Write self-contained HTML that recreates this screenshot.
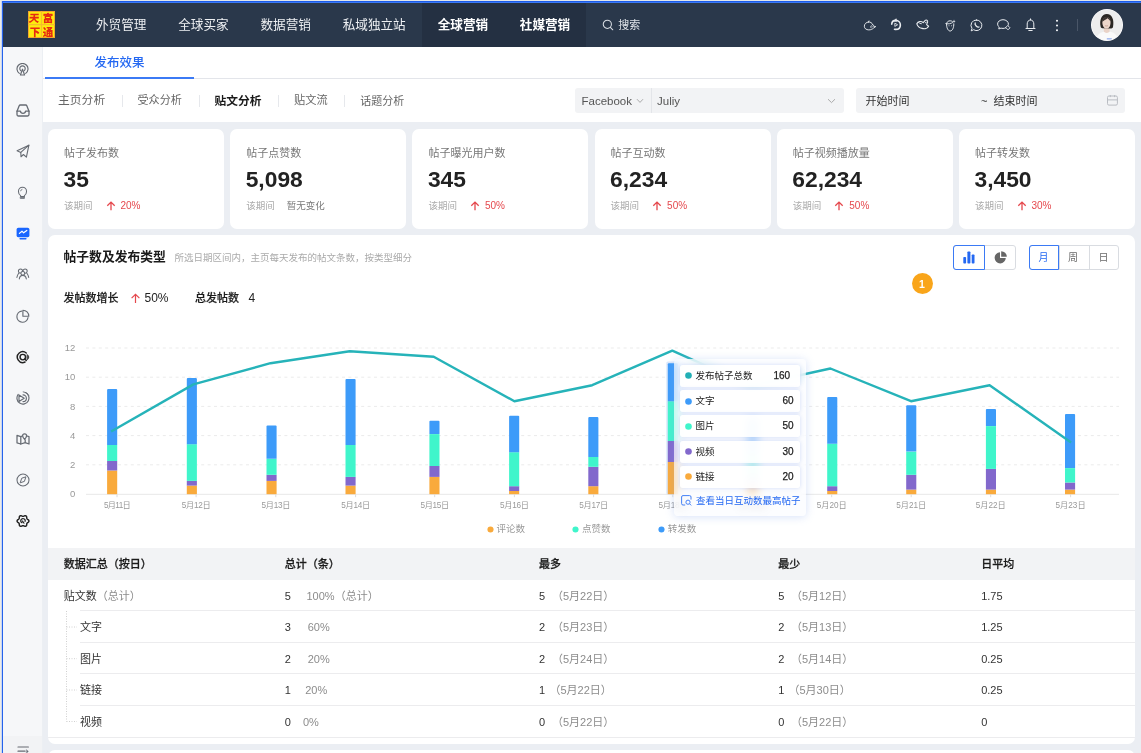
<!DOCTYPE html>
<html lang="zh-CN"><head><meta charset="utf-8"><title>发布效果</title>
<style>
*{box-sizing:border-box;margin:0;padding:0}
html,body{width:1141px;height:753px;overflow:hidden;background:#ebeef3}
body{font-family:"Liberation Sans","Noto Sans CJK SC",sans-serif;color:#333;position:relative;-webkit-font-smoothing:antialiased}
.a{position:absolute}
.t{position:absolute;white-space:nowrap;line-height:1}
.hdr{left:3px;top:3px;width:1138px;height:44px;background:#2a384b}
.hdr .dark{left:419px;top:0;width:164px;height:44px;background:#243042}
.nav{font-size:12.6px;color:#eef0f3;top:15.5px}
.nav.b{font-weight:700;color:#fff}
.side{left:3px;top:47px;width:40px;height:706px;background:#f6f7f9;border-right:1px solid #eceff3}
.side .bot{left:0;top:689px;width:39px;height:17px;background:#f2f3f5}
.tabs{left:43px;top:47px;width:1098px;height:32px;background:#fff;border-bottom:1px solid #e3e5ea}
.sub{left:43px;top:79px;width:1098px;height:43px;background:#fff}
.sub .i{font-size:12px;color:#666;top:16px}
.sub .i.on{color:#1a1a1a;font-weight:700}
.sub .d{position:absolute;top:16px;width:1px;height:12px;background:#e6e8ec}
.box{position:absolute;background:#f2f3f5;border-radius:3px}
.card{position:absolute;top:129px;width:176px;height:100px;background:#fff;border-radius:7px}
.card .h{left:16px;top:18.5px;font-size:11px;color:#777}
.card .n{left:15.5px;top:38.5px;font-size:22.8px;font-weight:700;color:#222}
.card .p{left:16px;top:71.8px;font-size:9.5px;color:#aaa}
.card .r{left:72.5px;top:71.5px;font-size:10px;color:#e5484d}
.card .g{left:56.5px;top:71.8px;font-size:9.5px;color:#7a7a7a}
.panel{left:48px;top:235px;width:1087px;height:509px;background:#fff;border-radius:7px;overflow:hidden}
.panel2{left:48px;top:750px;width:1087px;height:20px;background:#fff;border-radius:7px}
</style></head>
<body>
<div id="root" style="position:absolute;left:0;top:0;width:1141px;height:753px;overflow:hidden;will-change:transform">

<div class="a" style="left:0;top:0;width:1141px;height:1px;background:#e3e6e9"></div>
<div class="a" style="left:0;top:1px;width:1141px;height:1px;background:#1d5be8"></div>
<div class="a" style="left:0;top:2px;width:1141px;height:1px;background:#3b7af5"></div>
<div class="a" style="left:0;top:0;width:1px;height:753px;background:#edece6"></div>
<div class="a" style="left:1px;top:1px;width:1px;height:752px;background:#c9d6f3"></div>
<div class="a" style="left:2px;top:1px;width:1px;height:752px;background:#2563eb"></div>
<div class="a hdr">
<div class="a dark"></div>
<svg class="a" style="left:25px;top:8px" width="27" height="27" viewBox="0 0 27 27"><rect width="27" height="27" fill="#fdec0d"/><rect x=".5" y=".5" width="26" height="26" fill="none" stroke="#f3a62e" stroke-width="1"/><path d="M13.500 0V27M0 13.700H27" stroke="#f6bd2c" stroke-width="1.300"/><g fill="#e62a12" font-family="Liberation Sans,Noto Sans CJK SC,sans-serif" font-weight="900" font-size="10.500"><text x="1.800" y="11.300" transform="skewX(-6)" style="font-size:10.500px">天</text><text x="14.700" y="11" style="font-size:10.500px">富</text><text x="1.800" y="24.700" style="font-size:10.500px">下</text><text x="14.700" y="24.600" style="font-size:10.500px">通</text></g></svg>
<span class="t nav" style="left:93px">外贸管理</span>
<span class="t nav" style="left:175.2px">全球买家</span>
<span class="t nav" style="left:257.5px">数据营销</span>
<span class="t nav" style="left:339.7px">私域独立站</span>
<span class="t nav b" style="left:434.7px">全球营销</span>
<span class="t nav b" style="left:516.8px">社媒营销</span>
<svg class="a" style="left:599px;top:16.2px" width="12.4" height="12.4" viewBox="0 0 13 13" fill="none" stroke="#d8dde3" stroke-width="1.1"><circle cx="5.6" cy="5.6" r="4.3"/><path d="M8.8 8.8L11.3 11.3" stroke-linecap="round"/></svg>
<span class="t" style="left:615.3px;top:16.5px;font-size:11px;color:#dfe3e8">搜索</span>
<svg class="a" style="left:860.0px;top:16.7px" width="14" height="11" viewBox="0 0 14 11" fill="none" stroke="#e9ecf0" stroke-width="1" stroke-linecap="round" stroke-linejoin="round" ><g transform="translate(.6 .5) scale(.92)"><path d="M5.400 1.600C7.400 1.400 9.200 2.600 9.800 4.200M5.400 1.600C2.800 1.800 .8 3.800 .8 6.200C.8 8.600 2.800 10.200 5.600 10.200C8 10.200 9.600 9.400 10.600 8.400L13.200 6.600L10.800 6.200C10.800 5.400 10.400 4.800 9.800 4.200"/><path d="M5.400 1.600L5.800 .5" /><path d="M8.300 5.600C7.500 6.300 7.500 7.400 8.300 8.100" stroke-width=".9"/><circle cx="9.300" cy="6.900" r=".55" fill="#e9ecf0" stroke="none"/></g></svg>
<svg class="a" style="left:887.2px;top:15.2px" width="12" height="13" viewBox="0 0 12 13" fill="none" stroke="#e9ecf0" stroke-width="1" stroke-linecap="round" stroke-linejoin="round" ><g transform="translate(.4 .3) scale(.94)"><path d="M1.400 6.200C1.600 3.800 3.400 2.200 5.800 2.200C8.600 2.200 10.600 4.400 10.600 7C10.600 9.800 8.600 11.800 5.800 11.800C5.200 11.800 4.800 11.700 4.400 11.600" stroke-width="1.700"/><path d="M3.600 2.800L6.200 .4L6.600 3.200Z" fill="#e9ecf0" stroke-width=".6"/><path d="M4.700 5.600V8.600L7.300 7.100Z" stroke-width=".9"/></g></svg>
<svg class="a" style="left:913.1px;top:16.4px" width="14" height="11" viewBox="0 0 14 11" fill="none" stroke="#e9ecf0" stroke-width="1" stroke-linecap="round" stroke-linejoin="round" ><path d="M.8 4.800C2 2.400 5 1.800 7.200 3.600L9 1.600C10.200 .4 12 1.400 11.600 3L10.600 5.600L12.600 7.200C11.600 9.400 8.600 10.200 6 9.400C3.600 8.800 1.600 7.200 .8 4.800Z" stroke-width="1.100"/><path d="M3.800 4.400L5.400 4.700" stroke-width=".9"/><path d="M9.300 3.800L10.300 3.200" stroke-width=".9"/></svg>
<svg class="a" style="left:941.5px;top:15.5px" width="11" height="13" viewBox="0 0 11 13" fill="none" stroke="#e9ecf0" stroke-width="1" stroke-linecap="round" stroke-linejoin="round" ><path d="M1.600 5C1.600 3 3.200 1.800 5.200 1.800C6 1.800 6.600 2 7.200 2.300M8.800 4.800C9 8.600 7.400 12 5.200 12C3 12 1.400 8.600 1.600 5"/><path d="M.8 4.600C2.800 5.200 6 4.800 7.600 3.600" stroke-width=".9"/><path d="M9 .6L9.500 1.900L10.700 2.300L9.500 2.800L9 4L8.500 2.800L7.300 2.300L8.500 1.900Z" fill="#e9ecf0" stroke="none"/><circle cx="4" cy="6.800" r=".5" fill="#e9ecf0" stroke="none"/><circle cx="6.600" cy="6.800" r=".5" fill="#e9ecf0" stroke="none"/></svg>
<svg class="a" style="left:967.3px;top:15.5px" width="13" height="13" viewBox="0 0 13 13" fill="none" stroke="#e9ecf0" stroke-width="1" stroke-linecap="round" stroke-linejoin="round" ><path d="M6.600 1A5.300 5.300 0 1 1 3.600 10.700L1.200 11.900L2 9.400A5.300 5.300 0 0 1 6.600 1Z"/><path d="M5.200 4C4.800 4.800 5.200 6 6.200 7C7.200 8 8.200 8.400 9 8" stroke-width="1.300"/></svg>
<svg class="a" style="left:993.5px;top:16.0px" width="14" height="12" viewBox="0 0 14 12" fill="none" stroke="#e9ecf0" stroke-width="1" stroke-linecap="round" stroke-linejoin="round" ><path d="M8.800 8.800C8 9.200 7 9.400 6 9.400C5.200 9.400 4.600 9.300 4 9.100L1.800 10L2.200 8C1.200 7.200 .6 6.200 .6 5C.6 2.600 3 .7 6 .7C9 .7 11.400 2.600 11.400 5C11.400 5.400 11.300 5.800 11.200 6.200"/><path d="M11 6.800L13 8.800L11 10.800L9 8.800Z" stroke-width=".9"/></svg>
<svg class="a" style="left:1022.0px;top:15.0px" width="11" height="13" viewBox="0 0 11 13" fill="none" stroke="#e9ecf0" stroke-width="1" stroke-linecap="round" stroke-linejoin="round" ><path d="M5.500 .9V2M1 10.500H10M2.200 10.500V6C2.200 3.600 3.600 2 5.500 2C7.400 2 8.800 3.600 8.800 6V10.500M3.800 12.500H7.200"/></svg>
<svg class="a" style="left:1052.4px;top:15.5px" width="4" height="13" viewBox="0 0 4 13" fill="#f0f2f5"><circle cx="2" cy="1.800" r="1.050"/><circle cx="2" cy="6.500" r="1.050"/><circle cx="2" cy="11.200" r="1.050"/></svg>
<svg class="a" style="left:1087.700px;top:6.100px" width="32" height="32" viewBox="0 0 32 32"><defs><clipPath id="avc"><circle cx="16" cy="16" r="15.300"/></clipPath><filter id="avb" x="-20%" y="-20%" width="140%" height="140%"><feGaussianBlur stdDeviation=".45"/></filter></defs><circle cx="16" cy="16" r="16" fill="#fdfdfd"/><g clip-path="url(#avc)"><rect width="32" height="32" fill="#ededed"/><g filter="url(#avb)"><path d="M4.500 32C5 26.500 8.500 23.800 12.500 22.800H19.500C23.500 23.800 27 26.500 27.500 32Z" fill="#fafafa"/><path d="M12.800 18.500H18.600V22.600C17.400 24.400 14 24.400 12.800 22.600Z" fill="#ead3c7"/><path d="M9.600 17.600C8.300 11 10.600 5 15.800 5C21.200 5 23.400 11 22 18C21.600 19.200 20.800 19.600 20 19.400L11.400 19.200C10.400 19.200 9.800 18.600 9.600 17.600Z" fill="#2b2624"/><path d="M11.400 12.400C11.800 10 13.400 8.200 15.600 8.200C17.800 8.200 19.300 10 19.500 12.400C19.700 15.400 18.900 19.400 15.500 19.600C12.300 19.400 11.100 15.400 11.400 12.400Z" fill="#edd6ca"/><path d="M11 12.800C11.600 9.800 13.200 8 15.600 7.800C17.800 8 19.400 9.600 19.900 12.800C18.600 11.200 17.600 10 16.600 9.200C15 10.400 12.800 11.800 11 12.800Z" fill="#3a322f"/><path d="M14 16.600C14.800 17.100 16.200 17.100 17 16.600" stroke="#a9766a" stroke-width=".5" fill="none"/><rect x="15.800" y="29" width="5" height="1.600" fill="#a9bdf0"/></g></g></svg>
<div class="a" style="left:1073.5px;top:16px;width:1px;height:12px;background:#4a5668"></div>
</div>
<div class="a side"><div class="a bot"></div><svg class="a" style="left:13.0px;top:15.8px" width="13" height="13" viewBox="0 0 13 13" fill="none" stroke="#666b73" stroke-width="1.15" stroke-linecap="round" stroke-linejoin="round"><path d="M3.300 10.400A5.500 5.500 0 1 1 9.700 10.400"/><path d="M4.700 7.600A2.700 2.700 0 1 1 8.300 7.600"/><path d="M6.500 6.200L4.400 12H8.600Z"/></svg>
<svg class="a" style="left:12.5px;top:56.8px" width="14" height="13" viewBox="0 0 14 13" fill="none" stroke="#666b73" stroke-width="1.3" stroke-linecap="round" stroke-linejoin="round"><path d="M1 7.200L3.200 1.800C3.400 1.300 3.800 1 4.300 1H9.700C10.200 1 10.600 1.300 10.800 1.800L13 7.200V10.600C13 11.400 12.400 12 11.600 12H2.400C1.600 12 1 11.400 1 10.600Z"/><path d="M1 7.200H4.400C4.600 8.600 5.600 9.400 7 9.400C8.400 9.400 9.400 8.600 9.600 7.200H13"/></svg>
<svg class="a" style="left:12.7px;top:97.0px" width="14" height="14" viewBox="0 0 14 14" fill="none" stroke="#666b73" stroke-width="1.1" stroke-linecap="round" stroke-linejoin="round"><path d="M12.900 1.200L1.100 6.800L4.800 8.400L5 12.800L7.400 10.500L10.400 13.200Z"/><path d="M4.800 8.400L12.900 1.200"/></svg>
<svg class="a" style="left:14.2px;top:138.6px" width="11" height="14" viewBox="0 0 11 14" fill="none" stroke="#666b73" stroke-width="1.15" stroke-linecap="round" stroke-linejoin="round"><g transform="translate(.55 .3) scale(.9 .95)"><path d="M3.400 9.800C1.800 8.800 1 7.200 1 5.500C1 3 3 1 5.500 1C8 1 10 3 10 5.500C10 7.200 9.200 8.800 7.600 9.800V10.800H3.400Z"/><path d="M3.400 11.200H7.600V12.800H3.400Z" fill="#8a8e95" stroke-width=".8"/><path d="M3.400 4.800C3.600 4 4.200 3.400 5 3.200" stroke-width=".9"/></g></svg>
<svg class="a" style="left:12.5px;top:179.9px" width="14" height="13" viewBox="0 0 14 13"><rect x=".6" y=".8" width="12.800" height="9.400" rx="1.700" fill="#1a66ff"/><rect x="3.400" y="10.900" width="7.200" height="1.500" rx=".75" fill="#1a66ff"/><path d="M3.400 6.400L6 4.200L7.600 5.800L10.800 3.400" fill="none" stroke="#fff" stroke-width="1.200" stroke-linecap="round" stroke-linejoin="round"/></svg>
<svg class="a" style="left:12.6px;top:221.4px" width="14" height="12" viewBox="0 0 14 12" fill="none" stroke="#666b73" stroke-width="1.05" stroke-linecap="round" stroke-linejoin="round"><circle cx="4.500" cy="3.100" r="2.100"/><circle cx="9.100" cy="3.100" r="2.100"/><circle cx="6.800" cy="5.300" r="1.900" fill="#f6f7f9"/><path d="M2.700 5.200C1.800 6.400 1.200 7.800 .9 9.400M10.900 5.200C11.800 6.400 12.400 7.800 12.700 9.400M3.300 10.900C3.600 8.600 5 7.400 6.800 7.400C8.600 7.400 10 8.600 10.300 10.900"/></svg>
<svg class="a" style="left:12.6px;top:261.6px" width="14" height="14" viewBox="0 0 14 14" fill="none" stroke="#666b73" stroke-width="1.15" stroke-linecap="round" stroke-linejoin="round"><path d="M5.600 2.100A5.600 5.600 0 1 0 12 8.600"/><path d="M6.900 1.200V7.200H12.800C12.800 3.900 10.200 1.200 6.900 1.200Z"/></svg>
<svg class="a" style="left:12.5px;top:302.5px" width="14" height="14" viewBox="0 0 14 14" fill="none" stroke="#222" stroke-width="1.45" stroke-linecap="round" stroke-linejoin="round"><path d="M10.270 2.960A5.400 5.400 0 1 0 9.080 12"/><circle cx="6.800" cy="7.100" r="2.750"/><path d="M8.780 9.080L10.300 10.600"/><path d="M11.300 4.600C13.300 6 13.300 8.400 11.300 9.800Z" fill="#222" stroke-width=".6"/></svg>
<svg class="a" style="left:12.5px;top:343.7px" width="14" height="14" viewBox="0 0 14 14" fill="none" stroke="#666b73" stroke-width="1.15" stroke-linecap="round" stroke-linejoin="round"><path d="M9.400 1.600A6 6 0 1 1 2.200 3.400"/><path d="M7 3.800A3.400 3.400 0 0 1 7 10.600"/><path d="M3 4V10.400L8.200 7.200Z"/><path d="M7.200 .8A6.400 6.400 0 0 1 12.800 4.200" stroke-width=".9"/></svg>
<svg class="a" style="left:12.6px;top:386.0px" width="14" height="12" viewBox="0 0 14 12" fill="none" stroke="#666b73" stroke-width="1.25" stroke-linecap="round" stroke-linejoin="round"><path d="M1 2.400L4.800 3.600V11L1 9.800Z"/><path d="M4.800 3.600L6.200 3M4.800 11L9.200 9.600M9.200 6.800V9.600L13 11V3.600L11 3"/><path d="M8.600 .8C9.800 .8 10.600 1.700 10.600 2.800C10.600 4.200 8.600 6.400 8.600 6.400C8.600 6.400 6.600 4.200 6.600 2.800C6.600 1.700 7.400 .8 8.600 .8Z"/></svg>
<svg class="a" style="left:12.5px;top:426.0px" width="14" height="14" viewBox="0 0 14 14" fill="none" stroke="#666b73" stroke-width="1.05" stroke-linecap="round" stroke-linejoin="round"><circle cx="7" cy="7" r="6"/><path d="M9.800 4.200L8.400 8.400L4.200 9.800L5.600 5.600Z" stroke-width="1"/></svg>
<svg class="a" style="left:12.9px;top:466.9px" width="14" height="14" viewBox="0 0 14 14" fill="none" stroke="#222" stroke-width="1.45" stroke-linecap="round" stroke-linejoin="round"><path d="M12.90 7.00 L12.79 7.51 L12.48 7.98 L12.05 8.37 L11.60 8.69 L11.21 8.99 L10.95 9.30 L10.81 9.69 L10.75 10.18 L10.70 10.74 L10.58 11.31 L10.33 11.81 L9.95 12.17 L9.46 12.32 L8.90 12.29 L8.35 12.11 L7.85 11.87 L7.41 11.68 L7.00 11.61 L6.59 11.68 L6.15 11.87 L5.65 12.11 L5.10 12.29 L4.54 12.32 L4.05 12.17 L3.67 11.81 L3.42 11.31 L3.30 10.74 L3.25 10.18 L3.19 9.69 L3.05 9.30 L2.79 8.99 L2.40 8.69 L1.95 8.37 L1.52 7.98 L1.21 7.51 L1.10 7.00 L1.21 6.49 L1.52 6.02 L1.95 5.63 L2.40 5.31 L2.79 5.01 L3.05 4.70 L3.19 4.31 L3.25 3.82 L3.30 3.26 L3.42 2.69 L3.67 2.19 L4.05 1.83 L4.54 1.68 L5.10 1.71 L5.65 1.89 L6.15 2.13 L6.59 2.32 L7.00 2.39 L7.41 2.32 L7.85 2.13 L8.35 1.89 L8.90 1.71 L9.46 1.68 L9.95 1.83 L10.33 2.19 L10.58 2.69 L10.70 3.26 L10.75 3.82 L10.81 4.31 L10.95 4.70 L11.21 5.01 L11.60 5.31 L12.05 5.63 L12.48 6.02 L12.79 6.49Z"/><path d="M5.900 8.700A2.200 2.200 0 1 1 9.100 7.400M6.500 7C6.900 7.900 7.400 8.600 8 9.100" stroke-width="1.200"/></svg>
<svg class="a" style="left:13.500px;top:699px" width="13" height="8" viewBox="0 0 13 8" fill="none" stroke="#666b73" stroke-width="1.200" stroke-linecap="round"><path d="M1 1H11.400M1 5.200H8"/><path d="M9.600 3.800L11.400 5.400L9.600 7Z" fill="#666b73" stroke-width=".4"/></svg></div>
<div class="a tabs"><span class="t" style="left:51.5px;top:10px;font-size:12.5px;font-weight:500;color:#2468f2">发布效果</span><div class="a" style="left:2px;top:30px;width:149px;height:2px;background:#3b7af5"></div></div>
<div class="a sub">
<span class="t i" style="left:15px;font-size:11.8px;top:16.1px">主页分析</span>
<span class="t i" style="left:94.5px;font-size:11.1px;top:16.45px">受众分析</span>
<span class="t i on" style="left:171.5px;font-size:11.75px;top:16.125px">贴文分析</span>
<span class="t i" style="left:251px;font-size:11.2px;top:16.4px">贴文流</span>
<span class="t i" style="left:317.2px;font-size:11px;top:16.5px">话题分析</span>
<div class="d" style="left:78.5px"></div>
<div class="d" style="left:155.5px"></div>
<div class="d" style="left:235px"></div>
<div class="d" style="left:300.5px"></div>
<div class="box" style="left:532px;top:9px;width:269px;height:25px"></div>
<div class="a" style="left:607.5px;top:9px;width:1px;height:25px;background:#e3e5e9"></div>
<span class="t" style="left:538.5px;top:16.5px;font-size:11.5px;color:#555">Facebook</span>
<svg class="a" style="left:592.5px;top:18.8px" width="8" height="6" viewBox="0 0 8 6" fill="none" stroke="#aaa" stroke-width="1"><path d="M1 1.2L4 4.4L7 1.2"/></svg>
<span class="t" style="left:614px;top:16.5px;font-size:11.5px;color:#555">Juliy</span>
<svg class="a" style="left:784px;top:18.8px" width="9" height="6" viewBox="0 0 9 6" fill="none" stroke="#aaa" stroke-width="1"><path d="M1 1.2L4.5 4.6L8 1.2"/></svg>
<div class="box" style="left:813px;top:9px;width:269px;height:25px"></div>
<span class="t" style="left:822.5px;top:17.2px;font-size:11px;color:#333">开始时间</span>
<span class="t" style="left:938px;top:17.2px;font-size:11px;color:#333">~</span>
<span class="t" style="left:950.5px;top:17.2px;font-size:11px;color:#333">结束时间</span>
<svg class="a" style="left:1063.900px;top:16.300px" width="11" height="11" viewBox="0 0 11 11" fill="none" stroke="#b9bcc2" stroke-width="1"><rect x=".5" y="1" width="9.900" height="9.100" rx="1.400"/><path d="M.5 4.900H10.400M3.300 .1V2.100M7.600 .1V2.100"/></svg>
</div>
<div class="card" style="left:48.0px"><span class="t h">帖子发布数</span><span class="t n">35</span><span class="t p">该期间</span>
<svg class="a" style="left:57.5px;top:71.5px" width="10" height="10" viewBox="0 0 10 10" fill="none" stroke="#e5484d" stroke-width="1.3"><path d="M5 9.3V1.2M1.3 4.8L5 1.1L8.7 4.8"/></svg><span class="t r">20%</span>
</div>
<div class="card" style="left:230.2px"><span class="t h">帖子点赞数</span><span class="t n">5,098</span><span class="t p">该期间</span>
<span class="t g">暂无变化</span>
</div>
<div class="card" style="left:412.4px"><span class="t h">帖子曝光用户数</span><span class="t n">345</span><span class="t p">该期间</span>
<svg class="a" style="left:57.5px;top:71.5px" width="10" height="10" viewBox="0 0 10 10" fill="none" stroke="#e5484d" stroke-width="1.3"><path d="M5 9.3V1.2M1.3 4.8L5 1.1L8.7 4.8"/></svg><span class="t r">50%</span>
</div>
<div class="card" style="left:594.6px"><span class="t h">帖子互动数</span><span class="t n">6,234</span><span class="t p">该期间</span>
<svg class="a" style="left:57.5px;top:71.5px" width="10" height="10" viewBox="0 0 10 10" fill="none" stroke="#e5484d" stroke-width="1.3"><path d="M5 9.3V1.2M1.3 4.8L5 1.1L8.7 4.8"/></svg><span class="t r">50%</span>
</div>
<div class="card" style="left:776.8px"><span class="t h">帖子视频播放量</span><span class="t n">62,234</span><span class="t p">该期间</span>
<svg class="a" style="left:57.5px;top:71.5px" width="10" height="10" viewBox="0 0 10 10" fill="none" stroke="#e5484d" stroke-width="1.3"><path d="M5 9.3V1.2M1.3 4.8L5 1.1L8.7 4.8"/></svg><span class="t r">50%</span>
</div>
<div class="card" style="left:959.0px"><span class="t h">帖子转发数</span><span class="t n">3,450</span><span class="t p">该期间</span>
<svg class="a" style="left:57.5px;top:71.5px" width="10" height="10" viewBox="0 0 10 10" fill="none" stroke="#e5484d" stroke-width="1.3"><path d="M5 9.3V1.2M1.3 4.8L5 1.1L8.7 4.8"/></svg><span class="t r">30%</span>
</div>
<div class="a panel">
<div class="a" style="left:-48px;top:-235px;width:1141px;height:753px">
<span class="t" style="left:63.5px;top:250.5px;font-size:12.8px;font-weight:700;color:#1a1a1a">帖子数及发布类型</span>
<span class="t" style="left:174.5px;top:253px;font-size:9.5px;color:#aaa">所选日期区间内，主页每天发布的帖文条数，按类型细分</span>
<span class="t" style="left:63.5px;top:292.5px;font-size:11px;font-weight:500;color:#1c1c1c;-webkit-text-stroke:.2px #1c1c1c">发帖数增长</span>
<svg class="a" style="left:130px;top:292.5px" width="11" height="11" viewBox="0 0 11 11" fill="none" stroke="#e5484d" stroke-width="1.2"><path d="M5.5 10V1.4M1.6 5.2L5.5 1.3L9.4 5.2"/></svg>
<span class="t" style="left:144.5px;top:292.3px;font-size:12px;color:#222">50%</span>
<span class="t" style="left:195px;top:292.5px;font-size:11px;font-weight:500;color:#1c1c1c;-webkit-text-stroke:.2px #1c1c1c">总发帖数</span>
<span class="t" style="left:248.5px;top:292.3px;font-size:12px;color:#222">4</span>
<div class="a" style="left:953px;top:244.5px;width:63px;height:25px;border:1px solid #d9dce1;border-radius:3px"></div>
<div class="a" style="left:953px;top:244.5px;width:32px;height:25px;border:1px solid #3b7af5;border-radius:3px 0 0 3px"></div>
<svg class="a" style="left:962.5px;top:250.5px" width="12" height="13" viewBox="0 0 12 13" fill="#2468f2"><rect x="0.3" y="6" width="2.8" height="6.6" rx="0.8"/><rect x="4.4" y="0.4" width="3" height="12.2" rx="0.8"/><rect x="8.7" y="3.4" width="2.8" height="9.2" rx="0.8"/></svg>
<svg class="a" style="left:993.5px;top:251px" width="13" height="13" viewBox="0 0 13 13" fill="#666"><path d="M6 1.2A5.6 5.6 0 1 0 11.8 7H6Z"/><path d="M7.2 0.2A5.6 5.6 0 0 1 12.8 5.8H7.2Z"/></svg>
<div class="a" style="left:1029px;top:244.5px;width:90px;height:25px;border:1px solid #d9dce1;border-radius:3px"></div>
<div class="a" style="left:1058.5px;top:245px;width:1px;height:24px;background:#d9dce1"></div>
<div class="a" style="left:1089px;top:245px;width:1px;height:24px;background:#d9dce1"></div>
<div class="a" style="left:1029px;top:244.5px;width:30px;height:25px;border:1px solid #3b7af5;border-radius:3px 0 0 3px"></div>
<span class="t" style="left:1038.5px;top:252.6px;font-size:10px;color:#2468f2">月</span>
<span class="t" style="left:1068px;top:252.6px;font-size:10px;color:#6a6a6a">周</span>
<span class="t" style="left:1098.5px;top:252.6px;font-size:10px;color:#6a6a6a">日</span>
<div class="a" style="left:911.7px;top:273.4px;width:21px;height:21px;border-radius:50%;background:#f9a51a"></div><span class="t" style="left:919px;top:278.5px;font-size:10.5px;font-weight:700;color:#fff">1</span>
<svg class="a" style="left:0;top:0" width="1141" height="753" viewBox="0 0 1141 753">
<path d="M86 348 H1119" stroke="#ebebeb" stroke-width="1" stroke-dasharray="3 3.4" fill="none"/>
<path d="M86 377.2 H1119" stroke="#ebebeb" stroke-width="1" stroke-dasharray="3 3.4" fill="none"/>
<path d="M86 406.4 H1119" stroke="#ebebeb" stroke-width="1" stroke-dasharray="3 3.4" fill="none"/>
<path d="M86 435.6 H1119" stroke="#ebebeb" stroke-width="1" stroke-dasharray="3 3.4" fill="none"/>
<path d="M86 464.8 H1119" stroke="#ebebeb" stroke-width="1" stroke-dasharray="3 3.4" fill="none"/>
<path d="M86 494.3 H1119" stroke="#e8e8e8" stroke-width="1" fill="none"/>
<path d="M117 494.5 V497.2" stroke="#dcdcdc" stroke-width="1"/>
<path d="M196.1 494.5 V497.2" stroke="#dcdcdc" stroke-width="1"/>
<path d="M275.8 494.5 V497.2" stroke="#dcdcdc" stroke-width="1"/>
<path d="M355.6 494.5 V497.2" stroke="#dcdcdc" stroke-width="1"/>
<path d="M434.7 494.5 V497.2" stroke="#dcdcdc" stroke-width="1"/>
<path d="M514.4 494.5 V497.2" stroke="#dcdcdc" stroke-width="1"/>
<path d="M593.6 494.5 V497.2" stroke="#dcdcdc" stroke-width="1"/>
<path d="M672.8 494.5 V497.2" stroke="#dcdcdc" stroke-width="1"/>
<path d="M752.2 494.5 V497.2" stroke="#dcdcdc" stroke-width="1"/>
<path d="M831.7 494.5 V497.2" stroke="#dcdcdc" stroke-width="1"/>
<path d="M911.2 494.5 V497.2" stroke="#dcdcdc" stroke-width="1"/>
<path d="M990.7 494.5 V497.2" stroke="#dcdcdc" stroke-width="1"/>
<path d="M1070.6 494.5 V497.2" stroke="#dcdcdc" stroke-width="1"/>
<rect x="666.3" y="361.5" width="13" height="133" fill="#dbe8fb" rx="1.5"/>
<rect x="107.1" y="470.5" width="10.1" height="23.7" fill="#f9aa3c"/>
<rect x="107.1" y="461" width="10.1" height="9.5" fill="#8268cc"/>
<rect x="107.1" y="445" width="10.1" height="16" fill="#40f5cb"/>
<path d="M107.1 445 V390 Q107.1 389 108.1 389 H116.19999999999999 Q117.19999999999999 389 117.19999999999999 390 V445 Z" fill="#3d9bf9"/>
<rect x="186.8" y="485.6" width="10.1" height="8.6" fill="#f9aa3c"/>
<rect x="186.8" y="480.9" width="10.1" height="4.7" fill="#8268cc"/>
<rect x="186.8" y="444.2" width="10.1" height="36.7" fill="#40f5cb"/>
<path d="M186.8 444.2 V379 Q186.8 378 187.8 378 H195.9 Q196.9 378 196.9 379 V444.2 Z" fill="#3d9bf9"/>
<rect x="266.5" y="480.9" width="10.1" height="13.3" fill="#f9aa3c"/>
<rect x="266.5" y="474.8" width="10.1" height="6.1" fill="#8268cc"/>
<rect x="266.5" y="458.8" width="10.1" height="16.0" fill="#40f5cb"/>
<path d="M266.5 458.8 V426.6 Q266.5 425.6 267.5 425.6 H275.6 Q276.6 425.6 276.6 426.6 V458.8 Z" fill="#3d9bf9"/>
<rect x="345.5" y="485.6" width="10.1" height="8.6" fill="#f9aa3c"/>
<rect x="345.5" y="476.9" width="10.1" height="8.7" fill="#8268cc"/>
<rect x="345.5" y="445" width="10.1" height="31.9" fill="#40f5cb"/>
<path d="M345.5 445 V379.9 Q345.5 378.9 346.5 378.9 H354.6 Q355.6 378.9 355.6 379.9 V445 Z" fill="#3d9bf9"/>
<rect x="429.4" y="476.9" width="10.1" height="17.3" fill="#f9aa3c"/>
<rect x="429.4" y="466" width="10.1" height="10.9" fill="#8268cc"/>
<rect x="429.4" y="434.1" width="10.1" height="31.9" fill="#40f5cb"/>
<path d="M429.4 434.1 V421.8 Q429.4 420.8 430.4 420.8 H438.5 Q439.5 420.8 439.5 421.8 V434.1 Z" fill="#3d9bf9"/>
<rect x="509.1" y="491" width="10.1" height="3.2" fill="#f9aa3c"/>
<rect x="509.1" y="486.2" width="10.1" height="4.8" fill="#8268cc"/>
<rect x="509.1" y="452.2" width="10.1" height="34.0" fill="#40f5cb"/>
<path d="M509.1 452.2 V416.8 Q509.1 415.8 510.1 415.8 H518.2 Q519.2 415.8 519.2 416.8 V452.2 Z" fill="#3d9bf9"/>
<rect x="588.3" y="486.2" width="10.1" height="8.0" fill="#f9aa3c"/>
<rect x="588.3" y="466.8" width="10.1" height="19.4" fill="#8268cc"/>
<rect x="588.3" y="457" width="10.1" height="9.8" fill="#40f5cb"/>
<path d="M588.3 457 V417.9 Q588.3 416.9 589.3 416.9 H597.4 Q598.4 416.9 598.4 417.9 V457 Z" fill="#3d9bf9"/>
<rect x="667.8" y="462" width="10.1" height="32.2" fill="#f9aa3c"/>
<rect x="667.8" y="441" width="10.1" height="21" fill="#8268cc"/>
<rect x="667.8" y="401.2" width="10.1" height="39.8" fill="#40f5cb"/>
<path d="M667.8 401.2 V364.2 Q667.8 363.2 668.8 363.2 H676.9 Q677.9 363.2 677.9 364.2 V401.2 Z" fill="#3d9bf9"/>
<rect x="747.6" y="485" width="10.1" height="9.2" fill="#f9aa3c"/>
<rect x="747.6" y="478" width="10.1" height="7" fill="#8268cc"/>
<rect x="747.6" y="452" width="10.1" height="26" fill="#40f5cb"/>
<path d="M747.6 452 V419 Q747.6 418 748.6 418 H756.7 Q757.7 418 757.7 419 V452 Z" fill="#3d9bf9"/>
<rect x="827.2" y="491" width="10.1" height="3.2" fill="#f9aa3c"/>
<rect x="827.2" y="486.2" width="10.1" height="4.8" fill="#8268cc"/>
<rect x="827.2" y="443.7" width="10.1" height="42.5" fill="#40f5cb"/>
<path d="M827.2 443.7 V397.9 Q827.2 396.9 828.2 396.9 H836.3000000000001 Q837.3000000000001 396.9 837.3000000000001 397.9 V443.7 Z" fill="#3d9bf9"/>
<rect x="906.2" y="489.6" width="10.1" height="4.6" fill="#f9aa3c"/>
<rect x="906.2" y="474.8" width="10.1" height="14.8" fill="#8268cc"/>
<rect x="906.2" y="451.6" width="10.1" height="23.2" fill="#40f5cb"/>
<path d="M906.2 451.6 V406.2 Q906.2 405.2 907.2 405.2 H915.3000000000001 Q916.3000000000001 405.2 916.3000000000001 406.2 V451.6 Z" fill="#3d9bf9"/>
<rect x="985.9" y="489.6" width="10.1" height="4.6" fill="#f9aa3c"/>
<rect x="985.9" y="468.9" width="10.1" height="20.7" fill="#8268cc"/>
<rect x="985.9" y="426.1" width="10.1" height="42.8" fill="#40f5cb"/>
<path d="M985.9 426.1 V409.9 Q985.9 408.9 986.9 408.9 H995.0 Q996.0 408.9 996.0 409.9 V426.1 Z" fill="#3d9bf9"/>
<rect x="1065" y="489.6" width="10.1" height="4.6" fill="#f9aa3c"/>
<rect x="1065" y="482.5" width="10.1" height="7.1" fill="#8268cc"/>
<rect x="1065" y="468.1" width="10.1" height="14.4" fill="#40f5cb"/>
<path d="M1065 468.1 V414.9 Q1065 413.9 1066 413.9 H1074.1 Q1075.1 413.9 1075.1 414.9 V468.1 Z" fill="#3d9bf9"/>
<polyline points="111.1,431.5 193.4,384.4 270.5,363.2 349.7,351.2 433.7,356.8 514.4,401.2 592.2,385.2 672.3,350.7 751,386 830.4,368.5 911,401.2 989.6,385.2 1071.1,442.6" fill="none" stroke="#26b3b9" stroke-width="2.4" stroke-linejoin="round"/>
</svg>
<span class="t" style="right:1065.7px;top:343.2px;font-size:9.5px;color:#999">12</span>
<span class="t" style="right:1065.7px;top:372.4px;font-size:9.5px;color:#999">10</span>
<span class="t" style="right:1065.7px;top:401.59999999999997px;font-size:9.5px;color:#999">8</span>
<span class="t" style="right:1065.7px;top:430.8px;font-size:9.5px;color:#999">4</span>
<span class="t" style="right:1065.7px;top:460.0px;font-size:9.5px;color:#999">2</span>
<span class="t" style="right:1065.7px;top:489.2px;font-size:9.5px;color:#999">0</span>
<span class="t" style="left:97px;top:502px;width:40px;text-align:center;font-size:8.2px;color:#999;letter-spacing:-0.65px">5月11日</span>
<span class="t" style="left:176.1px;top:502px;width:40px;text-align:center;font-size:8.2px;color:#999;letter-spacing:-0.3px">5月12日</span>
<span class="t" style="left:255.8px;top:502px;width:40px;text-align:center;font-size:8.2px;color:#999;letter-spacing:-0.3px">5月13日</span>
<span class="t" style="left:335.6px;top:502px;width:40px;text-align:center;font-size:8.2px;color:#999;letter-spacing:-0.3px">5月14日</span>
<span class="t" style="left:414.7px;top:502px;width:40px;text-align:center;font-size:8.2px;color:#999;letter-spacing:-0.3px">5月15日</span>
<span class="t" style="left:494.4px;top:502px;width:40px;text-align:center;font-size:8.2px;color:#999;letter-spacing:-0.3px">5月16日</span>
<span class="t" style="left:573.6px;top:502px;width:40px;text-align:center;font-size:8.2px;color:#999;letter-spacing:-0.3px">5月17日</span>
<span class="t" style="left:652.8px;top:502px;width:40px;text-align:center;font-size:8.2px;color:#999;letter-spacing:-0.3px">5月18日</span>
<span class="t" style="left:732.2px;top:502px;width:40px;text-align:center;font-size:8.2px;color:#999;letter-spacing:-0.3px">5月19日</span>
<span class="t" style="left:811.7px;top:502px;width:40px;text-align:center;font-size:8.2px;color:#999;letter-spacing:0px">5月20日</span>
<span class="t" style="left:891.2px;top:502px;width:40px;text-align:center;font-size:8.2px;color:#999;letter-spacing:0px">5月21日</span>
<span class="t" style="left:970.7px;top:502px;width:40px;text-align:center;font-size:8.2px;color:#999;letter-spacing:0px">5月22日</span>
<span class="t" style="left:1050.6px;top:502px;width:40px;text-align:center;font-size:8.2px;color:#999;letter-spacing:0px">5月23日</span>
<svg class="a" style="left:485.5px;top:524.500px" width="9" height="9" viewBox="0 0 9 9"><circle cx="4.500" cy="4.500" r="3.050" fill="#f9aa3c"/></svg>
<span class="t" style="left:496.5px;top:524px;font-size:9.5px;color:#999">评论数</span>
<svg class="a" style="left:571.0px;top:524.500px" width="9" height="9" viewBox="0 0 9 9"><circle cx="4.500" cy="4.500" r="3.050" fill="#40f5cb"/></svg>
<span class="t" style="left:582.0px;top:524px;font-size:9.5px;color:#999">点赞数</span>
<svg class="a" style="left:656.7px;top:524.500px" width="9" height="9" viewBox="0 0 9 9"><circle cx="4.500" cy="4.500" r="3.050" fill="#3d9bf9"/></svg>
<span class="t" style="left:667.7px;top:524px;font-size:9.5px;color:#999">转发数</span>
<div class="a" style="left:674.2px;top:358.5px;width:131.4px;height:157.6px;border-radius:4px;background:rgba(250,252,255,.66);backdrop-filter:blur(4px);-webkit-backdrop-filter:blur(4px);box-shadow:0 1px 9px rgba(130,165,235,.32)"></div>
<div class="a" style="left:680.2px;top:364.6px;width:120px;height:22.3px;border-radius:3px;background:rgba(255,255,255,.9);box-shadow:0 0 4px rgba(110,140,225,.30)"></div>
<svg class="a" style="left:684px;top:371.25px" width="9" height="9" viewBox="0 0 9 9"><circle cx="4.500" cy="4.500" r="3.300" fill="#22afb5"/></svg>
<span class="t" style="left:695.5px;top:370.70000000000005px;font-size:9.5px;color:#222">发布帖子总数</span>
<span class="t" style="left:773.5px;top:370.70000000000005px;font-size:10px;color:#222;-webkit-text-stroke:.25px #222">160</span>
<div class="a" style="left:680.2px;top:389.9px;width:120px;height:22.3px;border-radius:3px;background:rgba(255,255,255,.9);box-shadow:0 0 4px rgba(110,140,225,.30)"></div>
<svg class="a" style="left:684px;top:396.54999999999995px" width="9" height="9" viewBox="0 0 9 9"><circle cx="4.500" cy="4.500" r="3.300" fill="#3d9bf9"/></svg>
<span class="t" style="left:695.5px;top:396.0px;font-size:9.5px;color:#222">文字</span>
<span class="t" style="left:782.5px;top:396.0px;font-size:10px;color:#222;-webkit-text-stroke:.25px #222">60</span>
<div class="a" style="left:680.2px;top:415.2px;width:120px;height:22.3px;border-radius:3px;background:rgba(255,255,255,.9);box-shadow:0 0 4px rgba(110,140,225,.30)"></div>
<svg class="a" style="left:684px;top:421.84999999999997px" width="9" height="9" viewBox="0 0 9 9"><circle cx="4.500" cy="4.500" r="3.300" fill="#40f5cb"/></svg>
<span class="t" style="left:695.5px;top:421.3px;font-size:9.5px;color:#222">图片</span>
<span class="t" style="left:782.5px;top:421.3px;font-size:10px;color:#222;-webkit-text-stroke:.25px #222">50</span>
<div class="a" style="left:680.2px;top:440.5px;width:120px;height:22.3px;border-radius:3px;background:rgba(255,255,255,.9);box-shadow:0 0 4px rgba(110,140,225,.30)"></div>
<svg class="a" style="left:684px;top:447.15px" width="9" height="9" viewBox="0 0 9 9"><circle cx="4.500" cy="4.500" r="3.300" fill="#8268cc"/></svg>
<span class="t" style="left:695.5px;top:446.6px;font-size:9.5px;color:#222">视频</span>
<span class="t" style="left:782.5px;top:446.6px;font-size:10px;color:#222;-webkit-text-stroke:.25px #222">30</span>
<div class="a" style="left:680.2px;top:465.8px;width:120px;height:22.3px;border-radius:3px;background:rgba(255,255,255,.9);box-shadow:0 0 4px rgba(110,140,225,.30)"></div>
<svg class="a" style="left:684px;top:472.45px" width="9" height="9" viewBox="0 0 9 9"><circle cx="4.500" cy="4.500" r="3.300" fill="#f9aa3c"/></svg>
<span class="t" style="left:695.5px;top:471.90000000000003px;font-size:9.5px;color:#222">链接</span>
<span class="t" style="left:782.5px;top:471.90000000000003px;font-size:10px;color:#222;-webkit-text-stroke:.25px #222">20</span>
<svg class="a" style="left:681px;top:495px" width="11" height="11" viewBox="0 0 11 11" fill="none" stroke="#3b7af5" stroke-width=".95"><path d="M4.2 10H2A1.4 1.4 0 0 1 .6 8.600V2A1.4 1.4 0 0 1 2 .6H8.600A1.400 1.400 0 0 1 10 2V4.6"/><circle cx="7" cy="7.200" r="2.100"/><path d="M8.600 8.800L10.200 10.400"/></svg>
<span class="t" style="left:696px;top:495.5px;font-size:9.5px;color:#2468f2">查看当日互动数最高帖子</span>
<div class="a" style="left:48px;top:548px;width:1087px;height:31.6px;background:#f2f3f5"></div>
<span class="t" style="left:63.8px;top:559px;font-size:11px;font-weight:500;color:#1c1c1c;-webkit-text-stroke:.25px #1c1c1c">数据汇总（按日）</span>
<span class="t" style="left:284.8px;top:559px;font-size:11px;font-weight:500;color:#1c1c1c;-webkit-text-stroke:.25px #1c1c1c">总计（条）</span>
<span class="t" style="left:539px;top:559px;font-size:11px;font-weight:500;color:#1c1c1c;-webkit-text-stroke:.25px #1c1c1c">最多</span>
<span class="t" style="left:778.2px;top:559px;font-size:11px;font-weight:500;color:#1c1c1c;-webkit-text-stroke:.25px #1c1c1c">最少</span>
<span class="t" style="left:981.2px;top:559px;font-size:11px;font-weight:500;color:#1c1c1c;-webkit-text-stroke:.25px #1c1c1c">日平均</span>
<span class="t" style="left:63.8px;top:590.6px;font-size:11px;color:#333">贴文数<span style="color:#8c8c8c">（总计）</span></span>
<span class="t" style="left:284.8px;top:590.6px;font-size:11px;color:#333">5</span><span class="t" style="left:306.5px;top:590.6px;font-size:11px;color:#8c8c8c">100%（总计）</span>
<span class="t" style="left:539px;top:590.6px;font-size:11px;color:#333">5</span><span class="t" style="left:552px;top:590.6px;font-size:11px;color:#8c8c8c">（5月22日）</span>
<span class="t" style="left:778.2px;top:590.6px;font-size:11px;color:#333">5</span><span class="t" style="left:791px;top:590.6px;font-size:11px;color:#8c8c8c">（5月12日）</span>
<span class="t" style="left:981.2px;top:590.6px;font-size:11px;color:#333">1.75</span>
<span class="t" style="left:80px;top:622.2px;font-size:11px;color:#333">文字</span>
<span class="t" style="left:284.8px;top:622.2px;font-size:11px;color:#333">3</span><span class="t" style="left:307.7px;top:622.2px;font-size:11px;color:#8c8c8c">60%</span>
<span class="t" style="left:539px;top:622.2px;font-size:11px;color:#333">2</span><span class="t" style="left:552px;top:622.2px;font-size:11px;color:#8c8c8c">（5月23日）</span>
<span class="t" style="left:778.2px;top:622.2px;font-size:11px;color:#333">2</span><span class="t" style="left:791px;top:622.2px;font-size:11px;color:#8c8c8c">（5月13日）</span>
<span class="t" style="left:981.2px;top:622.2px;font-size:11px;color:#333">1.25</span>
<span class="t" style="left:80px;top:653.9000000000001px;font-size:11px;color:#333">图片</span>
<span class="t" style="left:284.8px;top:653.9000000000001px;font-size:11px;color:#333">2</span><span class="t" style="left:307.7px;top:653.9000000000001px;font-size:11px;color:#8c8c8c">20%</span>
<span class="t" style="left:539px;top:653.9000000000001px;font-size:11px;color:#333">2</span><span class="t" style="left:552px;top:653.9000000000001px;font-size:11px;color:#8c8c8c">（5月24日）</span>
<span class="t" style="left:778.2px;top:653.9000000000001px;font-size:11px;color:#333">2</span><span class="t" style="left:791px;top:653.9000000000001px;font-size:11px;color:#8c8c8c">（5月14日）</span>
<span class="t" style="left:981.2px;top:653.9000000000001px;font-size:11px;color:#333">0.25</span>
<span class="t" style="left:80px;top:685.2px;font-size:11px;color:#333">链接</span>
<span class="t" style="left:284.8px;top:685.2px;font-size:11px;color:#333">1</span><span class="t" style="left:305.2px;top:685.2px;font-size:11px;color:#8c8c8c">20%</span>
<span class="t" style="left:539px;top:685.2px;font-size:11px;color:#333">1</span><span class="t" style="left:549.5px;top:685.2px;font-size:11px;color:#8c8c8c">（5月22日）</span>
<span class="t" style="left:778.2px;top:685.2px;font-size:11px;color:#333">1</span><span class="t" style="left:788.5px;top:685.2px;font-size:11px;color:#8c8c8c">（5月30日）</span>
<span class="t" style="left:981.2px;top:685.2px;font-size:11px;color:#333">0.25</span>
<span class="t" style="left:80px;top:716.7px;font-size:11px;color:#333">视频</span>
<span class="t" style="left:284.8px;top:716.7px;font-size:11px;color:#333">0</span><span class="t" style="left:303px;top:716.7px;font-size:11px;color:#8c8c8c">0%</span>
<span class="t" style="left:539px;top:716.7px;font-size:11px;color:#333">0</span><span class="t" style="left:552px;top:716.7px;font-size:11px;color:#8c8c8c">（5月22日）</span>
<span class="t" style="left:778.2px;top:716.7px;font-size:11px;color:#333">0</span><span class="t" style="left:791px;top:716.7px;font-size:11px;color:#8c8c8c">（5月22日）</span>
<span class="t" style="left:981.2px;top:716.7px;font-size:11px;color:#333">0</span>
<div class="a" style="left:79.6px;top:609.9px;width:1056px;height:1px;background:#ececee"></div>
<div class="a" style="left:79.6px;top:641.8px;width:1056px;height:1px;background:#ececee"></div>
<div class="a" style="left:79.6px;top:673.2px;width:1056px;height:1px;background:#ececee"></div>
<div class="a" style="left:79.6px;top:704.6px;width:1056px;height:1px;background:#ececee"></div>
<div class="a" style="left:48px;top:736.8px;width:1087px;height:1px;background:#ececee"></div>
<svg class="a" style="left:0;top:0" width="1141" height="753" viewBox="0 0 1141 753" fill="none" stroke="#d0d0d0" stroke-width="1" stroke-dasharray="1 1.5"><path d="M66.5 611V721.5"/>
<path d="M66.5 627 H77"/>
<path d="M66.5 658.7 H77"/>
<path d="M66.5 690 H77"/>
<path d="M66.5 721.5 H77"/>
</svg>
</div>
</div>
<div class="a panel2"></div>

</div>
</body></html>
